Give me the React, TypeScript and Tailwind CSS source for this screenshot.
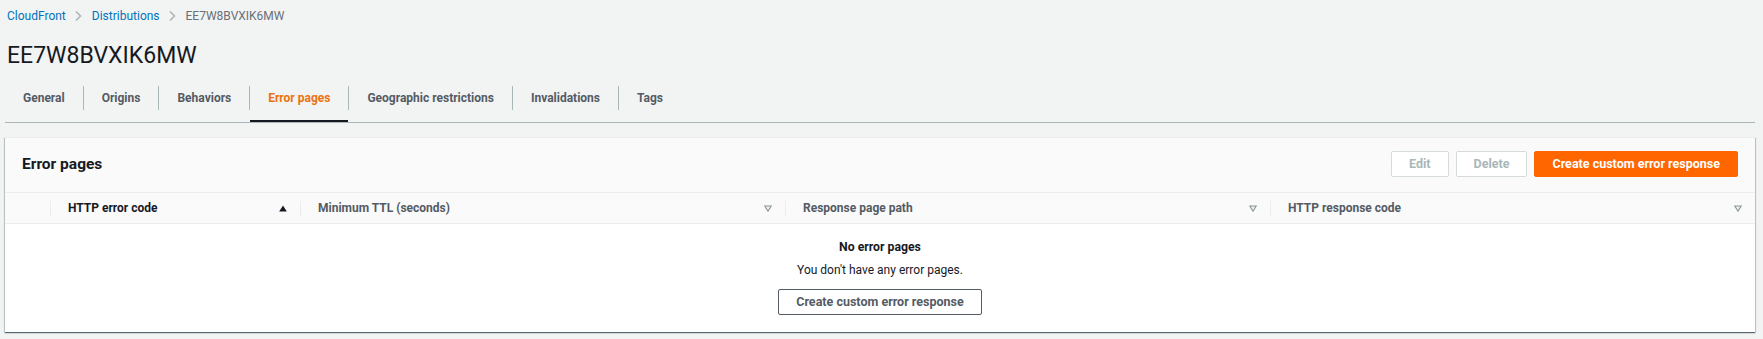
import React from "react";

const tabs = [
  "General",
  "Origins",
  "Behaviors",
  "Error pages",
  "Geographic restrictions",
  "Invalidations",
  "Tags",
];

const columns = [
  { label: "HTTP error code", sorted: true },
  { label: "Minimum TTL (seconds)", sorted: false },
  { label: "Response page path", sorted: false },
  { label: "HTTP response code", sorted: false },
];

const Chevron = () => (
  <svg width="12" height="12" viewBox="0 0 12 12" className="ml-[6px] mr-[8px]">
    <path d="M4 1.5 L8.5 6 L4 10.5" fill="none" stroke="#aab7b8" strokeWidth="1.6" />
  </svg>
);

const SortUp = () => (
  <svg width="8" height="7" viewBox="0 0 8 7">
    <path d="M4 0.5 L7.8 6.5 L0.2 6.5 Z" fill="#16191f" />
  </svg>
);

const SortNone = () => (
  <svg width="8" height="7" viewBox="0 0 8 7">
    <path d="M0.8 1 L7.2 1 L4 6.2 Z" fill="#eef0f0" stroke="#879596" strokeWidth="1.1" />
  </svg>
);

const App = () => {
  return (
    <div className="min-h-[339px] bg-[#f2f3f3] pl-[5px] pr-[8px] font-[Roboto,sans-serif]">
      {/* breadcrumbs */}
      <div className="flex items-center pt-[8px] pl-[2px] h-[24px] text-[12px] leading-[16px]">
        <span className="text-[#0073bb]">CloudFront</span>
        <Chevron />
        <span className="text-[#0073bb]">Distributions</span>
        <Chevron />
        <span className="text-[#687078]">EE7W8BVXIK6MW</span>
      </div>

      <h1 className="mt-[16px] pl-[2px] text-[23px] leading-[32px] font-normal text-[#16191f]">
        EE7W8BVXIK6MW
      </h1>

      {/* tabs */}
      <div className="mt-[2px] flex h-[49px] border-b border-[#aab7b8]">
        {tabs.map((t, i) => (
          <React.Fragment key={t}>
            {i > 0 && <div className="w-px h-[24px] self-center bg-[#aab7b8]" />}
            <div
              className={
                t === "Error pages"
                  ? "flex items-center px-[18px] text-[12px] font-bold text-[#ec7211] border-b-2 border-[#16191f] pt-[2px]"
                  : "flex items-center px-[18px] text-[12px] font-bold text-[#545b64]"
              }
            >
              {t}
            </div>
          </React.Fragment>
        ))}
      </div>

      {/* panel */}
      <div className="mt-[14px] bg-white border-t border-[#eaeded] shadow-[0_1px_1px_0_rgba(0,28,36,0.5),1px_1px_1px_0_rgba(0,28,36,0.15),-1px_1px_1px_0_rgba(0,28,36,0.15)]">
        <div className="flex items-center justify-between h-[55px] pb-[2px] px-[17px] bg-[#fafafa] border-b border-[#eaeded]">
          <h2 className="text-[15.5px] leading-[20px] font-bold text-[#16191f]">Error pages</h2>
          <div className="flex gap-[7px]">
            <button className="h-[26px] px-[17px] border border-[#d5dbdb] rounded-[2px] bg-white text-[12.5px] font-bold text-[#aab7b8]">
              Edit
            </button>
            <button className="h-[26px] px-[17px] border border-[#d5dbdb] rounded-[2px] bg-white text-[12.5px] font-bold text-[#aab7b8]">
              Delete
            </button>
            <button className="h-[26px] px-[17px] border border-[#ff6600] rounded-[2px] bg-[#ff6600] text-[12.5px] font-bold text-white">
              Create custom error response
            </button>
          </div>
        </div>

        {/* table header */}
        <div className="grid grid-cols-[45px_250px_1fr_1fr_1fr] h-[31px] bg-[#fafafa] border-b border-[#eaeded]">
          <div />
          {columns.map((c) => (
            <div key={c.label} className="flex items-center pr-[13px]">
              <div className="w-px h-[15px] bg-[#eaeded]" />
              <span
                className={
                  c.sorted
                    ? "ml-[17px] flex-1 text-[12px] font-bold text-[#16191f]"
                    : "ml-[17px] flex-1 text-[12px] font-bold text-[#545b64]"
                }
              >
                {c.label}
              </span>
              {c.sorted ? <SortUp /> : <SortNone />}
            </div>
          ))}
        </div>

        {/* empty state */}
        <div className="flex flex-col items-center pt-[15px] pb-[17px]">
          <div className="text-[12.25px] leading-[16px] font-bold text-[#16191f]">No error pages</div>
          <div className="mt-[7px] text-[12px] leading-[16px] text-[#16191f]">
            You don't have any error pages.
          </div>
          <button className="mt-[11px] h-[26px] px-[17px] border border-[#545b64] rounded-[2px] bg-white text-[12.5px] font-bold text-[#545b64]">
            Create custom error response
          </button>
        </div>
      </div>
    </div>
  );
};

export default App;
